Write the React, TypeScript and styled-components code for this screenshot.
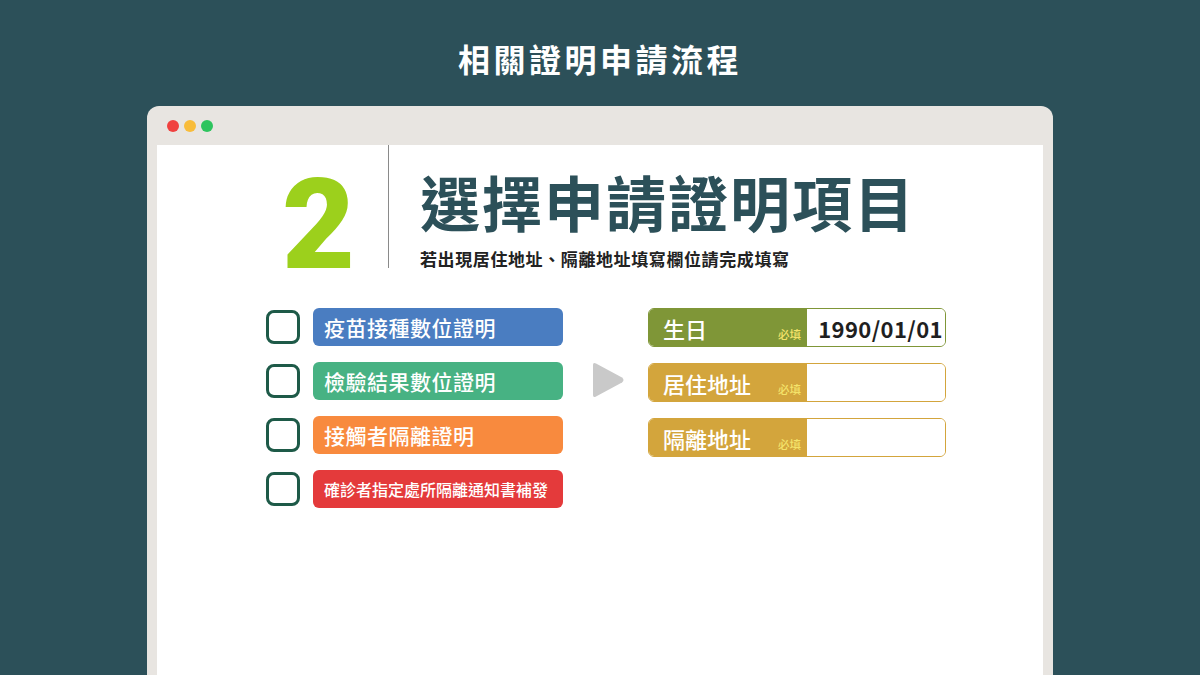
import React from "react";
import styled, { createGlobalStyle } from "styled-components";

const GlobalStyle = createGlobalStyle`
  html, body {
    margin: 0;
    padding: 0;
    background: #2c5059;
    font-family: "Noto Sans CJK TC", "Noto Sans", sans-serif;
  }
  * {
    box-sizing: border-box;
  }
`;

interface CertItem {
  label: string;
  color: string;
  small?: boolean;
}

interface FieldItem {
  label: string;
  color: string;
  value?: string;
}

const certs: CertItem[] = [
  { label: "疫苗接種數位證明", color: "#4a7dc1" },
  { label: "檢驗結果數位證明", color: "#47b283" },
  { label: "接觸者隔離證明", color: "#f88a3e" },
  { label: "確診者指定處所隔離通知書補發", color: "#e43a3b", small: true },
];

const fields: FieldItem[] = [
  { label: "生日", color: "#7f9637", value: "1990/01/01" },
  { label: "居住地址", color: "#d3a53c" },
  { label: "隔離地址", color: "#d3a53c" },
];

const App = () => {
  return (
    <>
      <GlobalStyle />
      <Page>
        <PageTitle>相關證明申請流程</PageTitle>
        <Browser>
          <TitleBar>
            <Dot $color="#f0413f" />
            <Dot $color="#f8bc3a" />
            <Dot $color="#2ec45e" />
          </TitleBar>
          <Content>
            <Header>
              <StepNumber>2</StepNumber>
              <Divider />
              <HeadingBlock>
                <Heading>選擇申請證明項目</Heading>
                <SubHeading>若出現居住地址、隔離地址填寫欄位請完成填寫</SubHeading>
              </HeadingBlock>
            </Header>
            <Body>
              <CertList>
                {certs.map((c) => (
                  <CertRow key={c.label}>
                    <CheckBox />
                    <CertPill $color={c.color} $small={c.small}>
                      {c.label}
                    </CertPill>
                  </CertRow>
                ))}
              </CertList>
              <Arrow>
                <svg width="36" height="38" viewBox="0 0 36 38">
                  <path
                    d="M3 4 Q3 1 6 2.5 L32 16.5 Q35 19 32 21.5 L6 35.5 Q3 37 3 34 Z"
                    fill="#c9c9c9"
                  />
                </svg>
              </Arrow>
              <FieldList>
                {fields.map((f) => (
                  <Field key={f.label} $color={f.color}>
                    <FieldLabel $color={f.color}>
                      <span>{f.label}</span>
                      <Required>必填</Required>
                    </FieldLabel>
                    <FieldValue>{f.value}</FieldValue>
                  </Field>
                ))}
              </FieldList>
            </Body>
          </Content>
        </Browser>
      </Page>
    </>
  );
};

const Page = styled.div`
  width: 1200px;
  height: 675px;
  overflow: hidden;
  display: flex;
  flex-direction: column;
  align-items: center;
`;

const PageTitle = styled.h1`
  margin: 34px 0 0;
  height: 72px;
  color: #ffffff;
  font-size: 32px;
  font-weight: 700;
  letter-spacing: 3.5px;
  line-height: 48px;
`;

const Browser = styled.div`
  width: 906px;
  flex: 1;
  background: #e8e5e1;
  border-radius: 12px 12px 0 0;
  padding: 0 10px;
  display: flex;
  flex-direction: column;
`;

const TitleBar = styled.div`
  height: 39px;
  display: flex;
  align-items: center;
  gap: 5px;
  padding-left: 10px;
`;

const Dot = styled.span<{ $color: string }>`
  width: 12px;
  height: 12px;
  border-radius: 50%;
  background: ${({ $color }) => $color};
`;

const Content = styled.div`
  flex: 1;
  background: #ffffff;
`;

const Header = styled.div`
  display: flex;
  align-items: flex-end;
  padding-left: 125px;
  height: 123px;
`;

const StepNumber = styled.div`
  width: 106px;
  color: #9cd01c;
  font-family: Roboto, "Liberation Sans", sans-serif;
  font-size: 126px;
  font-weight: 900;
  line-height: 1;
  margin-bottom: -20px;
`;

const Divider = styled.div`
  width: 1px;
  align-self: stretch;
  background: #8a8a8a;
`;

const HeadingBlock = styled.div`
  padding-left: 31px;
  display: flex;
  flex-direction: column;
`;

const Heading = styled.div`
  color: #2c5059;
  font-size: 60px;
  font-weight: 700;
  letter-spacing: 2px;
  line-height: 70px;
`;

const SubHeading = styled.div`
  color: #222222;
  font-size: 17px;
  font-weight: 700;
  letter-spacing: 0.6px;
  line-height: 24px;
  margin-top: 11px;
  margin-bottom: -3px;
`;

const Body = styled.div`
  display: flex;
  align-items: flex-start;
  padding-left: 109px;
  padding-top: 40px;
`;

const CertList = styled.div`
  display: flex;
  flex-direction: column;
  gap: 16px;
`;

const CertRow = styled.div`
  display: flex;
  align-items: center;
  gap: 13px;
`;

const CheckBox = styled.div`
  width: 34px;
  height: 34px;
  border: 3px solid #1e5a48;
  border-radius: 8px;
`;

const CertPill = styled.div<{ $color: string; $small?: boolean }>`
  width: 250px;
  height: 38px;
  border-radius: 6px;
  background: ${({ $color }) => $color};
  color: #ffffff;
  font-size: ${({ $small }) => ($small ? "16px" : "21px")};
  font-weight: 500;
  display: flex;
  align-items: center;
  padding-left: 11px;
  white-space: nowrap;
  letter-spacing: ${({ $small }) => ($small ? "0" : "0.5px")};
`;

const Arrow = styled.div`
  margin-left: 27px;
  margin-top: 53px;
  display: flex;
`;

const FieldList = styled.div`
  margin-left: 22px;
  display: flex;
  flex-direction: column;
  gap: 16px;
`;

const Field = styled.div<{ $color: string }>`
  width: 298px;
  height: 39px;
  display: flex;
  border: 1.5px solid ${({ $color }) => $color};
  border-radius: 6px;
  overflow: hidden;
`;

const FieldLabel = styled.div<{ $color: string }>`
  width: 158px;
  background: ${({ $color }) => $color};
  color: #ffffff;
  font-size: 22px;
  font-weight: 500;
  display: flex;
  align-items: center;
  justify-content: space-between;
  padding-left: 14px;
  padding-right: 6px;
`;

const Required = styled.span`
  color: #f4e36a;
  font-size: 11.5px;
  align-self: flex-end;
  margin-bottom: 4px;
`;

const FieldValue = styled.div`
  flex: 1;
  background: #ffffff;
  color: #1f1f1f;
  font-size: 22px;
  font-weight: 700;
  letter-spacing: 0.4px;
  display: flex;
  align-items: center;
  justify-content: flex-end;
  padding-right: 2px;
`;

export default App;
